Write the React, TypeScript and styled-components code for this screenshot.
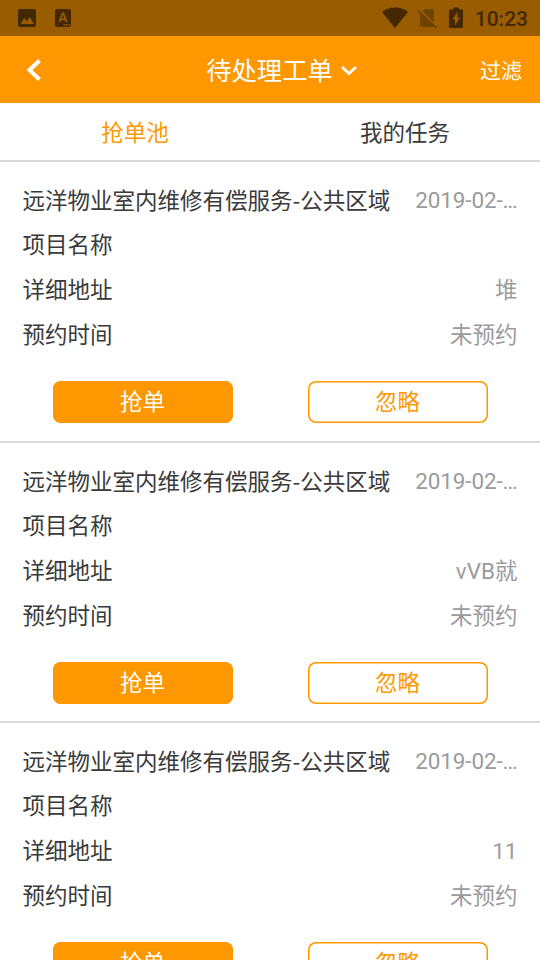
import React from 'react';
import styled, { createGlobalStyle } from 'styled-components';

const GlobalStyle = createGlobalStyle`
  * { box-sizing: border-box; }
  body { margin: 0; background: #fff; overflow: hidden; }
  button { font: inherit; margin: 0; padding: 0; cursor: pointer; }
`;
const Screen = styled.div`
  width: 540px; height: 960px; overflow: hidden; display: flex; flex-direction: column;
  color: #3a3a3a; background: #fff;
  font: 22.5px/45px Roboto, "Noto Sans CJK SC", sans-serif;
`;
const StatusBar = styled.div`
  height: 36px; flex: none; background: #995c00; color: #432800;
  display: flex; align-items: center; justify-content: space-between; padding: 0 12px 0 15px;
`;
const Icons = styled.div<{ $gap: number }>`
  display: flex; align-items: center; gap: ${p => p.$gap}px;
`;
const Clock = styled.span`
  font-size: 21px; font-weight: 500; line-height: 36px; padding: 1px 0 0 2px;
`;
const Header = styled.header`
  height: 67px; flex: none; background: #ff9800; color: #fff;
  display: grid; grid-template-columns: 100px 1fr 100px; align-items: center; padding: 0 18px 0 24px;
`;
const Title = styled.div`
  display: flex; align-items: center; justify-content: center; gap: 7px; font-size: 25.3px;
  padding: 3px 0 0 18px;
`;
const Filter = styled.div`
  text-align: right; font-size: 21px; padding-top: 3px;
`;
const Tabs = styled.nav`
  height: 59px; flex: none; display: flex; border-bottom: 2px solid #dadada;
`;
const Tab = styled.div<{ $active?: boolean }>`
  flex: 1; text-align: center; line-height: 60px; color: ${p => (p.$active ? '#ff9800' : '#3a3a3a')};
`;
const Card = styled.article`
  height: 280.5px; flex: none; padding: 16px 22.5px 0; border-bottom: 2px solid #dadada;
`;
const Row = styled.div`
  display: flex; justify-content: space-between; height: 45px; white-space: nowrap;
`;
const ServiceName = styled.span`
  font-family: "Noto Sans CJK SC", sans-serif; line-height: 42px;
`;
const Value = styled.span`
  color: #9b9b9b;
`;
const DateValue = styled(Value)`
  letter-spacing: -0.12px;
`;
const Actions = styled.div`
  display: flex; justify-content: space-between; padding: 23px 30px 0;
`;
const Button = styled.button<{ $filled?: boolean }>`
  width: 180px; height: 42px; border: 0; border-radius: 8px; line-height: 42px;
  box-shadow: inset 0 0 0 1.5px #ff9800;
  background: ${p => (p.$filled ? '#ff9800' : '#fff')}; color: ${p => (p.$filled ? '#fff' : '#ff9800')};
`;

const orders = [{ address: '堆' }, { address: 'vVB就' }, { address: '11' }];

export default function App() {
  return (
    <>
      <GlobalStyle />
      <Screen>
        <StatusBar>
          <Icons $gap={12}>
            <svg width="24" height="24" viewBox="0 0 24 24" fill="currentColor"><path d="M21 19V5a2 2 0 0 0-2-2H5a2 2 0 0 0-2 2v14a2 2 0 0 0 2 2h14a2 2 0 0 0 2-2zM5.500 18l3.800-6 2.500 3.500 3-4.500 4 7z" /></svg>
            <svg width="24" height="24" viewBox="0 0 24 24" fill="currentColor"><path fillRule="evenodd" d="M6 3h12a2 2 0 0 1 2 2v14a2 2 0 0 1-2 2H6a2 2 0 0 1-2-2V5a2 2 0 0 1 2-2zm5 3.500L7.500 16h2l.7-2h3.600l.7 2h2L13 6.500zm1 2 1.200 3.800h-2.400zM12.500 18v1.500H14V18zm2.500 0v1.500h1.500V18zm2.500 0v1.500H19V18z" /></svg>
          </Icons>
          <Icons $gap={5}>
            <svg width="28" height="22" viewBox="0 0 28 22" fill="currentColor"><path d="M13 21 0 5Q5 .500 13 .500T26 5z" /></svg>
            <svg width="24" height="24" viewBox="0 0 24 24" fill="currentColor"><path opacity=".5" d="M19 5a2 2 0 0 0-2-2h-7L7.700 5.300 19 16.600z" /><path opacity=".5" d="M3.600 3.900 2.300 5.200 5 7.900V19a2 2 0 0 0 2 2h10l1.900-.1 1.900 1.900 1.300-1.300z" /></svg>
            <svg width="24" height="24" viewBox="0 0 24 24" fill="currentColor"><path fillRule="evenodd" d="M18 3.500H15V1.500H9v2H6Q5 3.500 5 4.500V21q0 1 1 1h12q1 0 1-1V4.500q0-1-1-1zM11 19.500v-6H8.500l5-8v6H16z" /></svg>
            <Clock>10:23</Clock>
          </Icons>
        </StatusBar>
        <Header>
          <svg width="20" height="24" viewBox="0 0 20 24" fill="none" stroke="currentColor" strokeWidth="4"><path d="M15.500 2.500 5.500 12l10 9.500" /></svg>
          <Title>待处理工单<svg width="18" height="12" viewBox="0 0 18 12" fill="none" stroke="currentColor" strokeWidth="2.800"><path d="m2 2 7 6.500L16 2" /></svg></Title>
          <Filter>过滤</Filter>
        </Header>
        <Tabs><Tab $active>抢单池</Tab><Tab>我的任务</Tab></Tabs>
        {orders.map(order => (
          <Card key={order.address}>
            <Row><ServiceName>远洋物业室内维修有偿服务-公共区域</ServiceName><DateValue>2019-02-…</DateValue></Row>
            <Row>项目名称</Row>
            <Row>详细地址<Value>{order.address}</Value></Row>
            <Row>预约时间<Value>未预约</Value></Row>
            <Actions><Button $filled>抢单</Button><Button>忽略</Button></Actions>
          </Card>
        ))}
      </Screen>
    </>
  );
}
